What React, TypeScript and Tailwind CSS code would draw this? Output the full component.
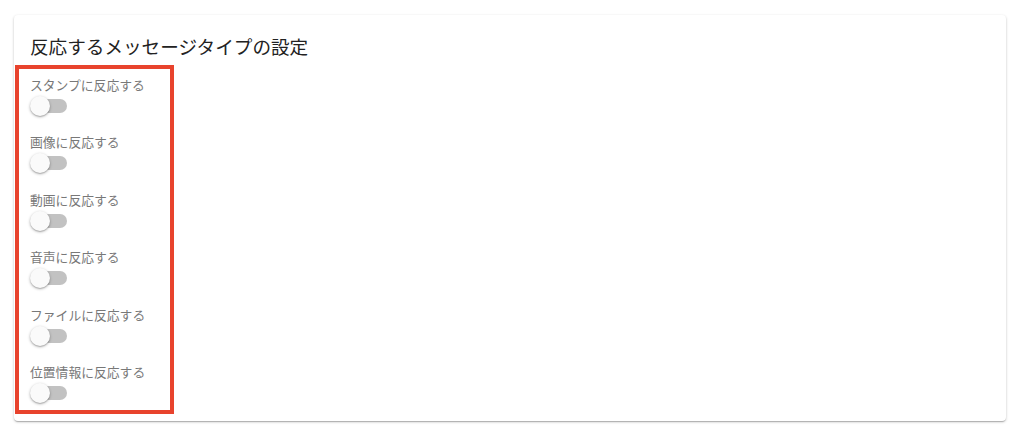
import React from 'react';

const items = [
  'スタンプに反応する',
  '画像に反応する',
  '動画に反応する',
  '音声に反応する',
  'ファイルに反応する',
  '位置情報に反応する',
];

function Toggle() {
  return (
    <div className="relative h-[20px] w-[38px]">
      <div className="absolute left-[3px] top-[3px] h-[14px] w-[34px] rounded-full bg-[#c2c2c2]" />
      <div className="absolute left-0 top-0 h-[20px] w-[20px] rounded-full bg-[#fafafa] shadow-[0_1px_3px_rgba(0,0,0,0.3),0_1px_1px_rgba(0,0,0,0.14)]" />
    </div>
  );
}

export default function App() {
  return (
    <div
      className="h-[434px] w-[1024px] bg-white pl-[14px] pr-[18px] pt-[15px]"
      style={{ fontFamily: '"Noto Sans CJK JP", "Noto Sans", sans-serif' }}
    >
      <div className="h-[406px] rounded-[4px] bg-white shadow-[0_1px_3px_rgba(0,0,0,0.2),0_1px_1px_rgba(0,0,0,0.12),0_2px_1px_-1px_rgba(0,0,0,0.1)]">
        <h2 className="px-[16px] pt-[19px] text-[18.6px] leading-[24px] text-[#222]">
          反応するメッセージタイプの設定
        </h2>
        <div className="ml-[1px] mt-[7px] w-[159px] border-[4px] border-[#e8432d] pb-[7px] pl-[11px] pt-[8px]">
          {items.map((label, i) => (
            <div key={label} className={i < items.length - 1 ? 'mb-[18.4px]' : ''}>
              <div className="text-[12.8px] leading-[16px] text-[#787878]">{label}</div>
              <div className="mt-[3px]">
                <Toggle />
              </div>
            </div>
          ))}
        </div>
      </div>
    </div>
  );
}
